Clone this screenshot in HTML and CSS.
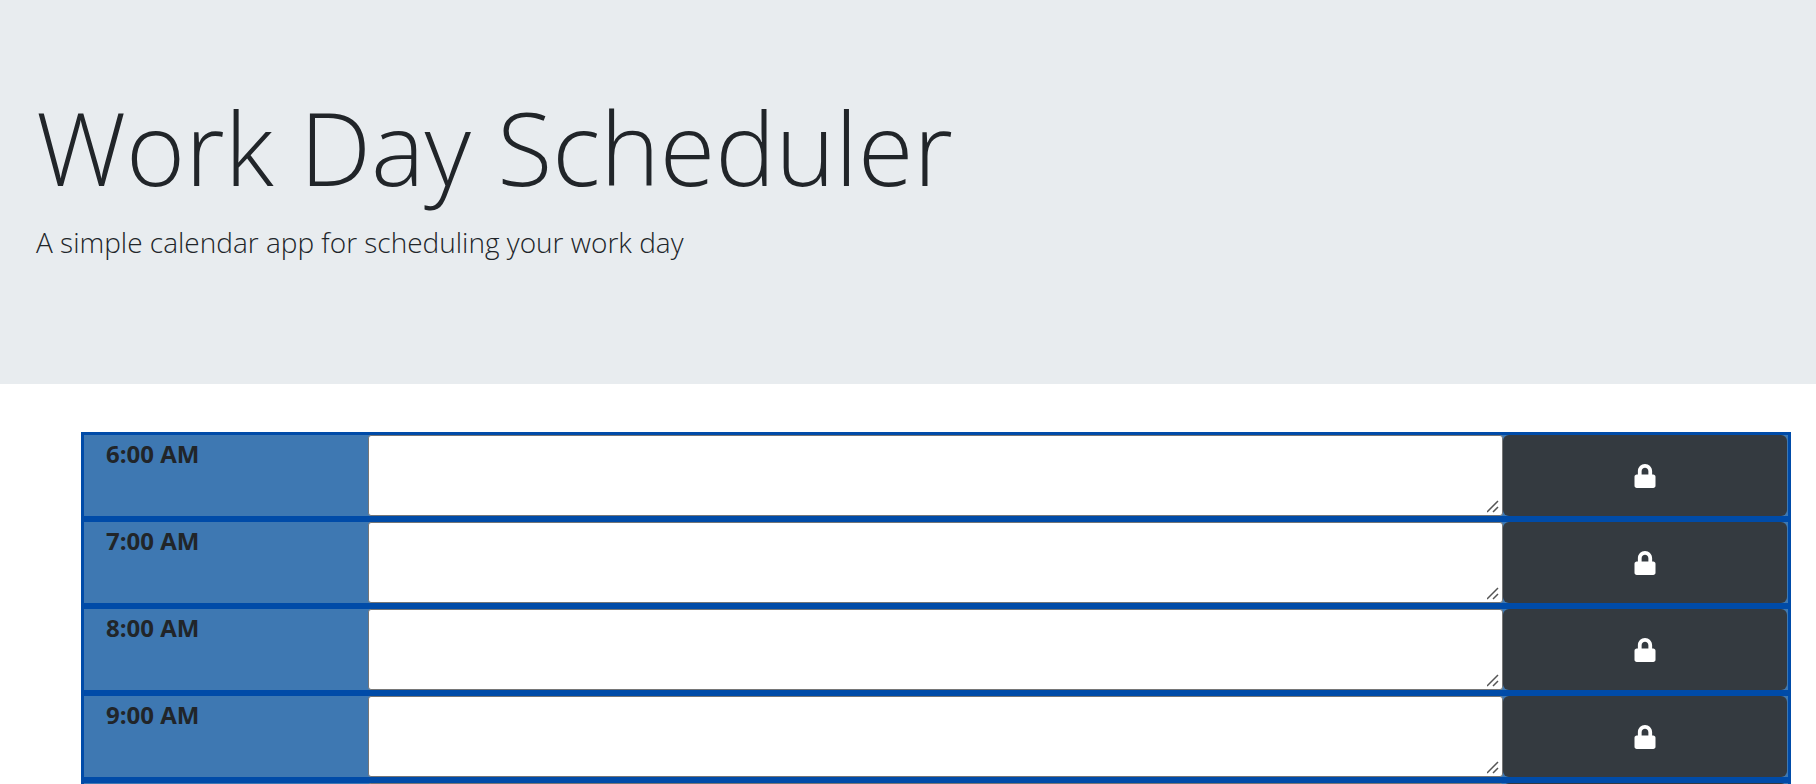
FILE: index.html
```html
<!DOCTYPE html>
<html lang="en">
<head>
<meta charset="utf-8">
<meta name="viewport" content="width=device-width, initial-scale=1">
<title>Work Day Scheduler</title>
<link rel="stylesheet" href="styles.css">
</head>
<body>
<svg class="sprite" aria-hidden="true">
  <symbol id="lock" viewBox="0 0 448 512">
    <path d="M400 224h-24v-72C376 68.200 307.800 0 224 0S72 68.200 72 152v72H48c-26.500 0-48 21.500-48 48v192c0 26.500 21.500 48 48 48h352c26.500 0 48-21.500 48-48V272c0-26.500-21.500-48-48-48zm-104 0H152v-72c0-39.700 32.300-72 72-72s72 32.300 72 72v72z"/>
  </symbol>
</svg>
<header class="jumbotron">
  <h1 class="title">Work Day Scheduler</h1>
  <p class="lead">A simple calendar app for scheduling your work day</p>
</header>
<main class="schedule">
  <div class="time-block">
    <label class="hour" for="note-6">6:00 AM</label>
    <textarea class="note" id="note-6"></textarea>
    <button class="save" type="button" aria-label="Save 6:00 AM"><svg class="icon"><use href="#lock"/></svg></button>
  </div>
  <div class="time-block">
    <label class="hour" for="note-7">7:00 AM</label>
    <textarea class="note" id="note-7"></textarea>
    <button class="save" type="button" aria-label="Save 7:00 AM"><svg class="icon"><use href="#lock"/></svg></button>
  </div>
  <div class="time-block">
    <label class="hour" for="note-8">8:00 AM</label>
    <textarea class="note" id="note-8"></textarea>
    <button class="save" type="button" aria-label="Save 8:00 AM"><svg class="icon"><use href="#lock"/></svg></button>
  </div>
  <div class="time-block">
    <label class="hour" for="note-9">9:00 AM</label>
    <textarea class="note" id="note-9"></textarea>
    <button class="save" type="button" aria-label="Save 9:00 AM"><svg class="icon"><use href="#lock"/></svg></button>
  </div>
  <div class="time-block">
    <label class="hour" for="note-next"></label>
    <textarea class="note" id="note-next" aria-label="Next hour"></textarea>
    <button class="save" type="button" aria-label="Save next hour"><svg class="icon"><use href="#lock"/></svg></button>
  </div>
</main>
</body>
</html>
```
FILE: styles.css
```css
* {
  box-sizing: border-box;
}

html {
  scrollbar-width: none;
}

body {
  margin: 0;
  background: #fff;
  color: #212529;
  font-family: "Open Sans", "Noto Sans", sans-serif;
  font-size: 24px;
  line-height: 36px;
}

.sprite {
  display: none;
}

.jumbotron {
  margin-bottom: 48px;
  padding: 82px 36px 124px;
  background: #e8ecef;
}

.title {
  margin: 0 0 12px;
  font-size: 101px;
  font-weight: 300;
  line-height: 130px;
}

.lead {
  margin: 0;
  font-size: 28px;
  font-weight: 300;
  line-height: 36px;
}

.schedule {
  margin: 0 25px 0 81px;
}

.time-block {
  display: grid;
  grid-template-columns: 2fr 8fr 2fr;
  min-height: 87px;
  padding-right: 1px;
  border: 3px solid #004ba8;
  background: #3e78b2;
}

.hour {
  padding: 1px 22px;
  font-weight: 700;
}

.note {
  width: 100%;
  height: 100%;
  margin: 0;
  padding: 3px;
  border: 1px solid #767676;
  border-radius: 3px;
  background: #fff;
  color: inherit;
  font: inherit;
  resize: vertical;
}

.note::-webkit-scrollbar {
  width: 17px;
  height: 17px;
}

.note::-webkit-resizer {
  background: url("data:image/svg+xml,%3Csvg xmlns='http://www.w3.org/2000/svg' width='17' height='17'%3E%3Cpath d='M2 14L13 3M8 14L13 9' stroke='%23555' stroke-width='1.500' fill='none'/%3E%3C/svg%3E") no-repeat right bottom;
}

.save {
  display: flex;
  align-items: center;
  justify-content: center;
  padding: 0;
  border: 0;
  border-radius: 6px;
  background: #343a40;
  color: #fff;
}

.icon {
  width: 22px;
  height: 24px;
  fill: currentColor;
}
```
